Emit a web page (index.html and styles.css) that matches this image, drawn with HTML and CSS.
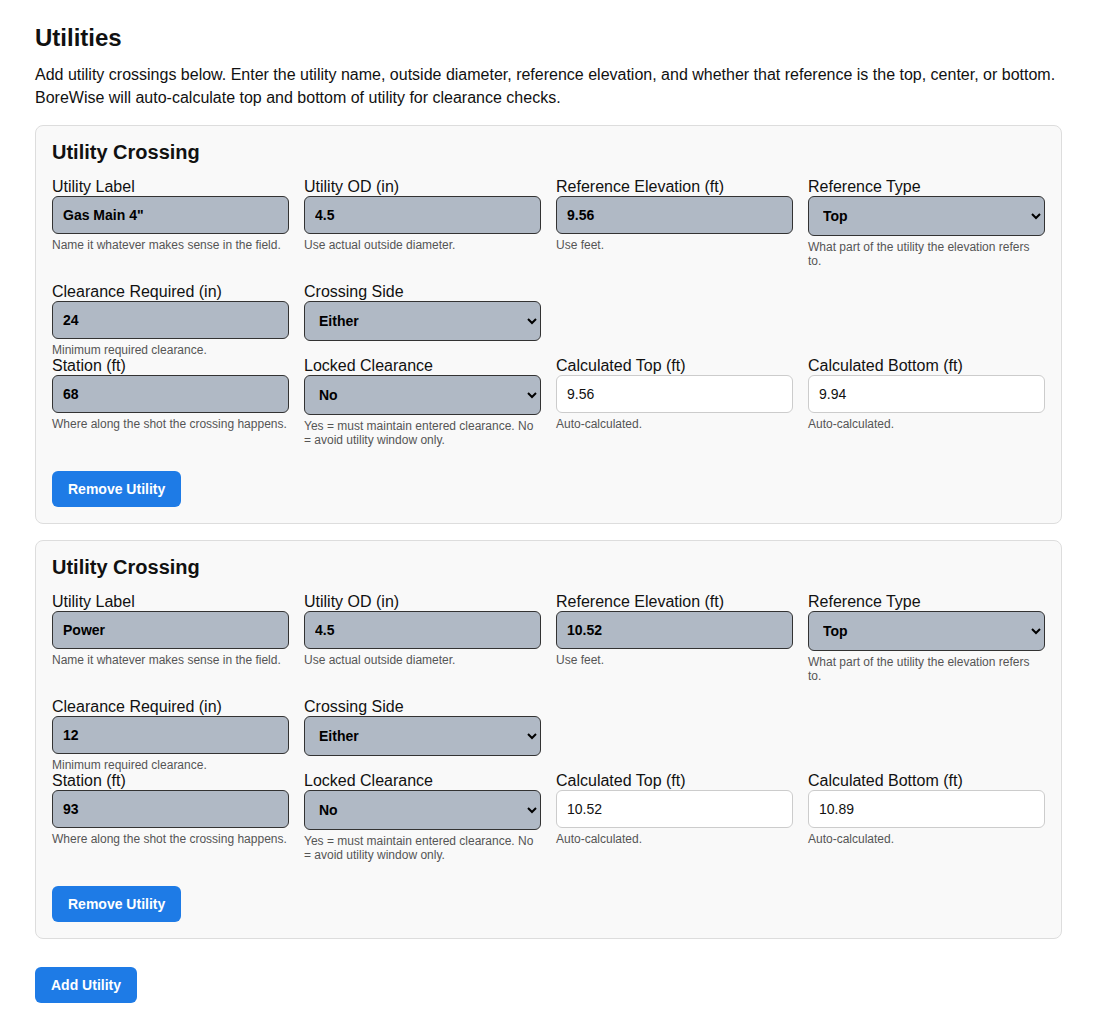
FILE: index.html
```html
<!DOCTYPE html>
<html lang="en">
<head>
<meta charset="utf-8">
<title>Utilities</title>
<link rel="stylesheet" href="styles.css">
</head>
<body>
<div class="page">
  <h2 class="title">Utilities</h2>
  <p class="intro">Add utility crossings below. Enter the utility name, outside diameter, reference elevation, and whether that reference is the top, center, or bottom. BoreWise will auto-calculate top and bottom of utility for clearance checks.</p>

  <div class="card">
    <h3 class="card-title">Utility Crossing</h3>
    <div class="row row-gap">
      <div class="field"><label>Utility Label</label><input class="in" type="text" value="Gas Main 4&quot;"><small class="hint">Name it whatever makes sense in the field.</small></div>
      <div class="field"><label>Utility OD (in)</label><input class="in" type="text" value="4.5"><small class="hint">Use actual outside diameter.</small></div>
      <div class="field"><label>Reference Elevation (ft)</label><input class="in" type="text" value="9.56"><small class="hint">Use feet.</small></div>
      <div class="field"><label>Reference Type</label><select class="in"><option selected>Top</option><option>Center</option><option>Bottom</option></select><small class="hint">What part of the utility the elevation refers to.</small></div>
    </div>
    <div class="row">
      <div class="field"><label>Clearance Required (in)</label><input class="in" type="text" value="24"><small class="hint">Minimum required clearance.</small></div>
      <div class="field"><label>Crossing Side</label><select class="in"><option selected>Either</option><option>Above</option><option>Below</option></select></div>
    </div>
    <div class="row row-gap">
      <div class="field"><label>Station (ft)</label><input class="in" type="text" value="68"><small class="hint">Where along the shot the crossing happens.</small></div>
      <div class="field"><label>Locked Clearance</label><select class="in"><option selected>No</option><option>Yes</option></select><small class="hint">Yes = must maintain entered clearance. No = avoid utility window only.</small></div>
      <div class="field"><label>Calculated Top (ft)</label><input class="calc" type="text" value="9.56" readonly><small class="hint">Auto-calculated.</small></div>
      <div class="field"><label>Calculated Bottom (ft)</label><input class="calc" type="text" value="9.94" readonly><small class="hint">Auto-calculated.</small></div>
    </div>
    <button class="btn btn-remove" type="button">Remove Utility</button>
  </div>

  <div class="card">
    <h3 class="card-title">Utility Crossing</h3>
    <div class="row row-gap">
      <div class="field"><label>Utility Label</label><input class="in" type="text" value="Power"><small class="hint">Name it whatever makes sense in the field.</small></div>
      <div class="field"><label>Utility OD (in)</label><input class="in" type="text" value="4.5"><small class="hint">Use actual outside diameter.</small></div>
      <div class="field"><label>Reference Elevation (ft)</label><input class="in" type="text" value="10.52"><small class="hint">Use feet.</small></div>
      <div class="field"><label>Reference Type</label><select class="in"><option selected>Top</option><option>Center</option><option>Bottom</option></select><small class="hint">What part of the utility the elevation refers to.</small></div>
    </div>
    <div class="row">
      <div class="field"><label>Clearance Required (in)</label><input class="in" type="text" value="12"><small class="hint">Minimum required clearance.</small></div>
      <div class="field"><label>Crossing Side</label><select class="in"><option selected>Either</option><option>Above</option><option>Below</option></select></div>
    </div>
    <div class="row row-gap">
      <div class="field"><label>Station (ft)</label><input class="in" type="text" value="93"><small class="hint">Where along the shot the crossing happens.</small></div>
      <div class="field"><label>Locked Clearance</label><select class="in"><option selected>No</option><option>Yes</option></select><small class="hint">Yes = must maintain entered clearance. No = avoid utility window only.</small></div>
      <div class="field"><label>Calculated Top (ft)</label><input class="calc" type="text" value="10.52" readonly><small class="hint">Auto-calculated.</small></div>
      <div class="field"><label>Calculated Bottom (ft)</label><input class="calc" type="text" value="10.89" readonly><small class="hint">Auto-calculated.</small></div>
    </div>
    <button class="btn btn-remove" type="button">Remove Utility</button>
  </div>

  <button class="btn btn-add" type="button">Add Utility</button>
</div>
</body>
</html>
```

FILE: styles.css
```css
html, body {
  margin: 0;
  padding: 0;
  background: #ffffff;
}
body {
  font-family: "Liberation Sans", Arial, sans-serif;
  color: #111111;
}
.page {
  padding: 24px 34px 17px 35px;
}
.title {
  margin: 0 0 11px;
  font-size: 24px;
  font-weight: bold;
  line-height: normal;
}
.intro {
  margin: 0 0 16px;
  font-size: 16px;
  line-height: 23px;
}
.card {
  background: #f9f9f9;
  border: 1px solid #dddddd;
  border-radius: 8px;
  padding: 16px;
  margin-bottom: 16px;
}
.card-title {
  margin: 0 0 15px;
  font-size: 20px;
  font-weight: bold;
  line-height: 21px;
}
.row {
  display: grid;
  grid-template-columns: repeat(4, 1fr);
  column-gap: 15px;
  align-items: start;
}
.row-gap {
  margin-bottom: 15px;
}
.field {
  display: flex;
  flex-direction: column;
  min-width: 0;
}
.field label {
  display: block;
  font-size: 16px;
  line-height: normal;
}
.in,
.calc {
  box-sizing: border-box;
  width: 100%;
  margin: 0;
  padding: 10px;
  font-family: "Liberation Sans", Arial, sans-serif;
  font-size: 14px;
  border-radius: 6px;
  color: #000000;
}
.in {
  background: #b0b9c5;
  border: 1px solid #333333;
  font-weight: bold;
}
.calc {
  background: #ffffff;
  border: 1px solid #cccccc;
  font-weight: normal;
  color: #111111;
}
.hint {
  display: block;
  margin-top: 4px;
  font-size: 12px;
  line-height: 14px;
  color: #555555;
}
.btn {
  display: inline-block;
  border: none;
  border-radius: 6px;
  background: #1e7be6;
  color: #ffffff;
  font-family: "Liberation Sans", Arial, sans-serif;
  font-size: 14px;
  font-weight: bold;
  line-height: 16px;
  padding: 10px 16px;
  cursor: pointer;
}
.btn-remove {
  margin-top: 9px;
}
.btn-add {
  margin-top: 12px;
}
```
